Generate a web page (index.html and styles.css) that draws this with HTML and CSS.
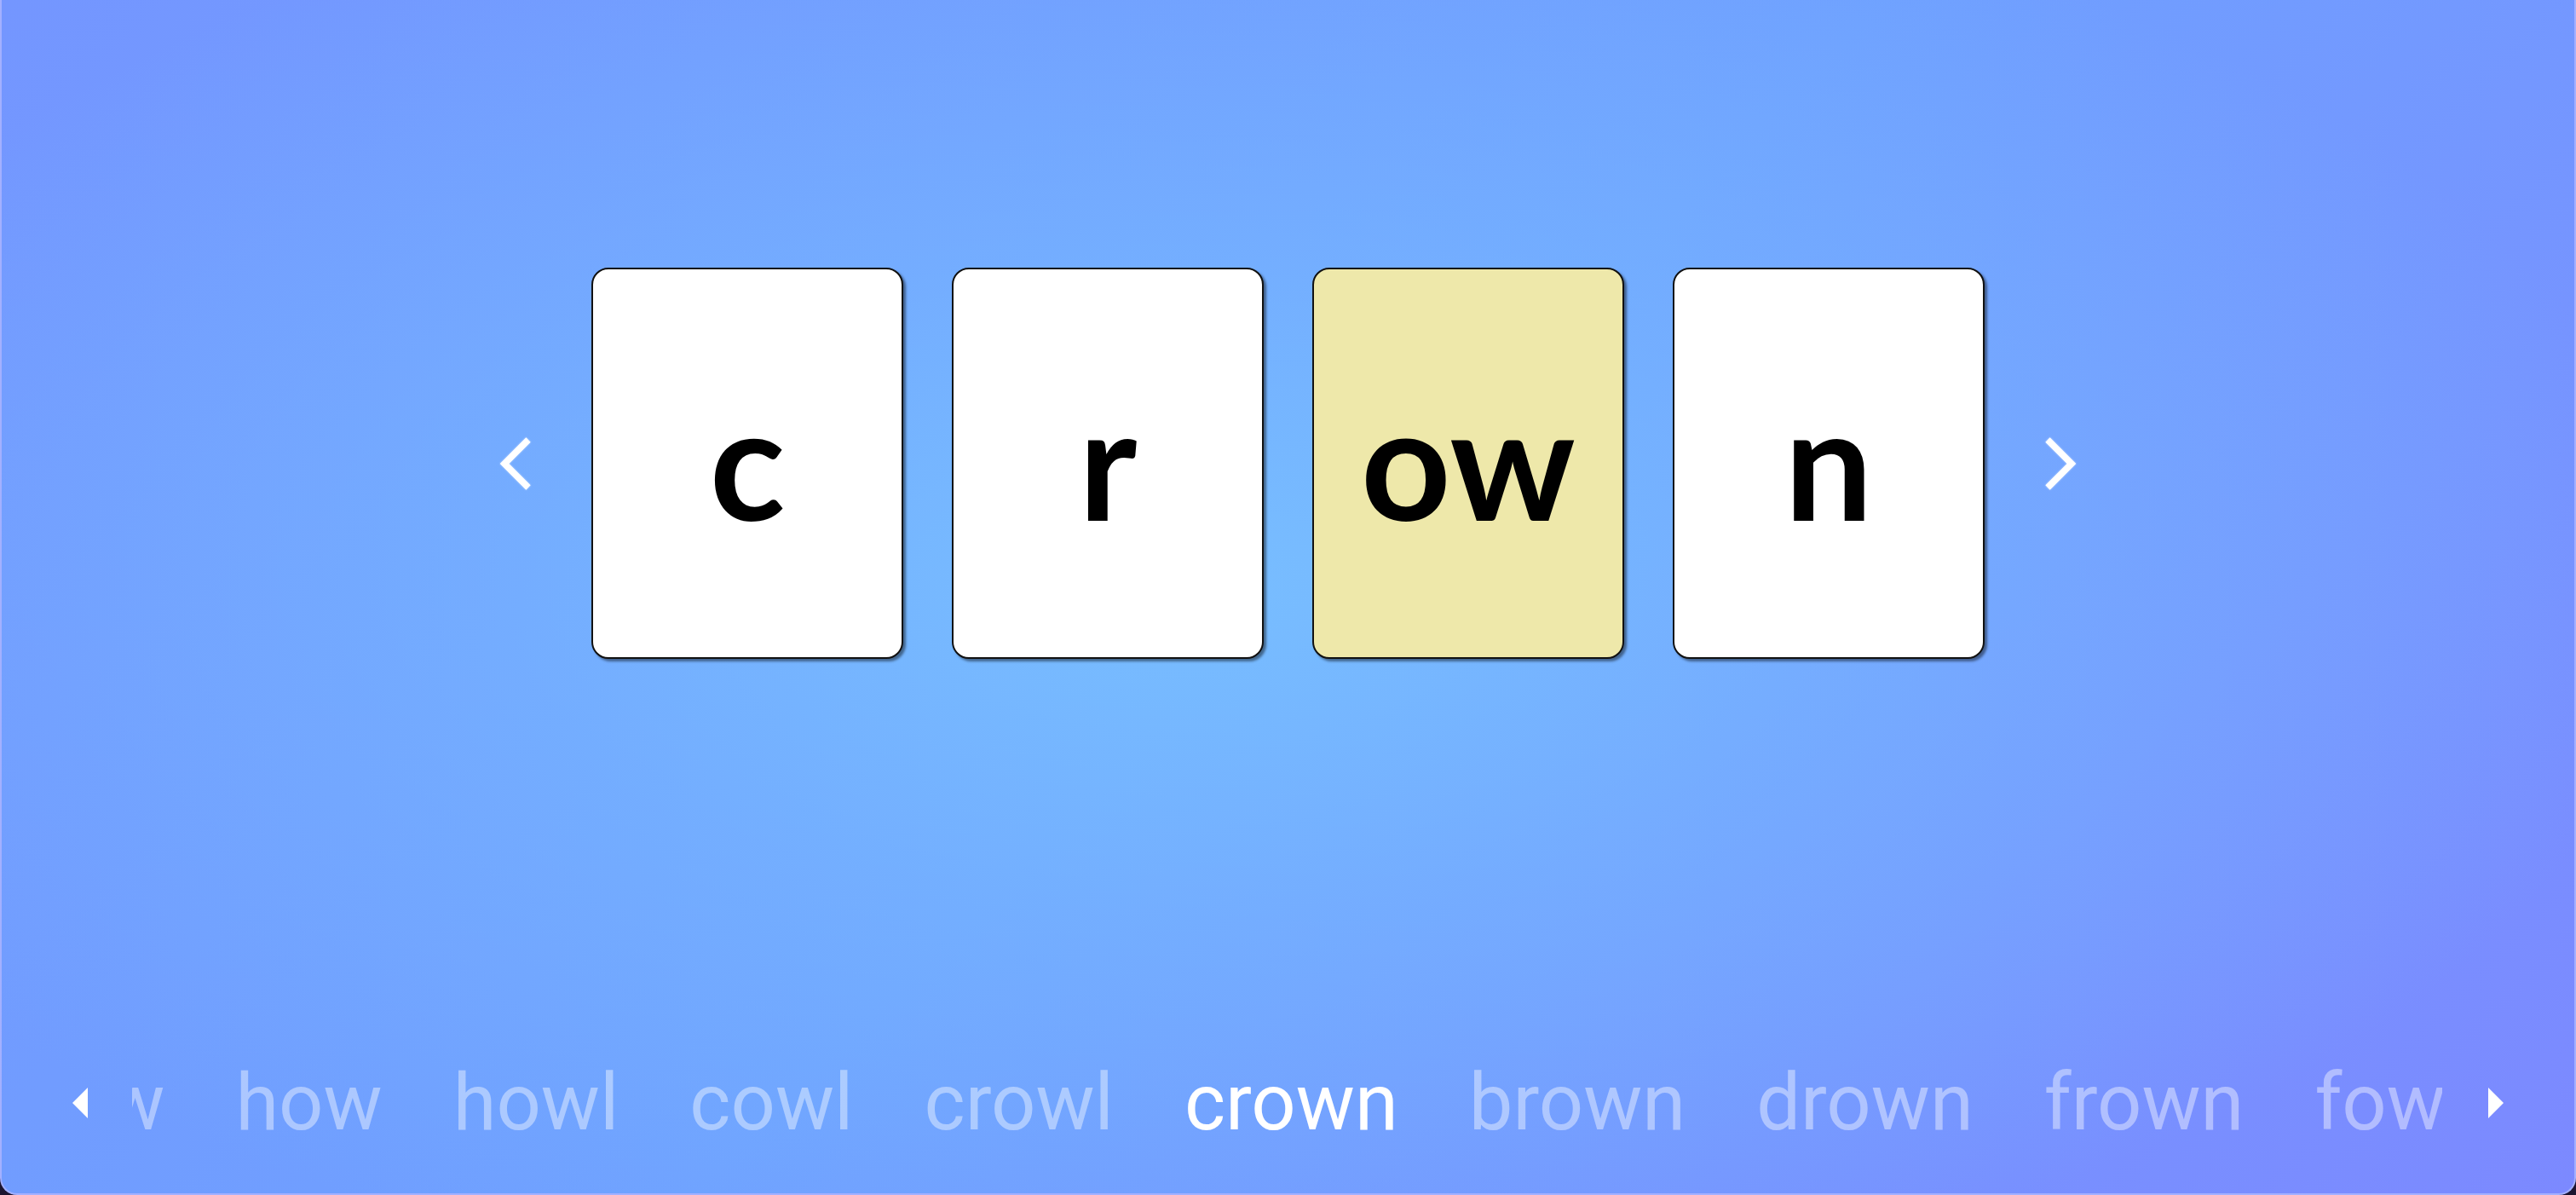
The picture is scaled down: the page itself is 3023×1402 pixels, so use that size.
FILE: index.html
```html
<!DOCTYPE html>
<html lang="en">
<head>
<meta charset="utf-8">
<title>crown</title>
<link rel="stylesheet" href="styles.css">
</head>
<body>
<div class="app">
  <div class="stage">
    <button class="chev" aria-label="Previous">
      <svg width="40" height="66" viewBox="0 0 40 66"><polyline points="34,5 6,33 34,61" fill="none" stroke="#fff" stroke-width="7.5" stroke-linejoin="miter"/></svg>
    </button>
    <div class="cards">
      <div class="card"><span class="letter">c</span></div>
      <div class="card"><span class="letter">r</span></div>
      <div class="card card-hl"><span class="letter">ow</span></div>
      <div class="card"><span class="letter">n</span></div>
    </div>
    <button class="chev" aria-label="Next">
      <svg width="40" height="66" viewBox="0 0 40 66"><polyline points="6,5 34,33 6,61" fill="none" stroke="#fff" stroke-width="7.5" stroke-linejoin="miter"/></svg>
    </button>
  </div>
  <div class="nav">
    <button class="tri" aria-label="Scroll left">
      <svg width="18" height="36" viewBox="0 0 18 36"><polygon points="18,0 0,18 18,36" fill="#fff"/></svg>
    </button>
    <div class="viewport">
      <div class="track">
        <span class="word">now</span>
        <span class="word">how</span>
        <span class="word">howl</span>
        <span class="word">cowl</span>
        <span class="word">crowl</span>
        <span class="word active">crown</span>
        <span class="word">brown</span>
        <span class="word">drown</span>
        <span class="word">frown</span>
        <span class="word">fowl</span>
        <span class="word">growl</span>
      </div>
    </div>
    <button class="tri" aria-label="Scroll right">
      <svg width="18" height="36" viewBox="0 0 18 36"><polygon points="0,0 18,18 0,36" fill="#fff"/></svg>
    </button>
  </div>
</div>
</body>
</html>
```

FILE: styles.css
```css
html, body {
  margin: 0;
  padding: 0;
  background: #1c1530;
}

.app {
  box-sizing: border-box;
  width: 3023px;
  height: 1402px;
  border: 2px solid #a3b0ff;
  border-top: none;
  border-radius: 0 0 20px 20px;
  background:
    radial-gradient(ellipse 58% 62% at 46% 49%, rgba(120, 190, 255, 1) 0%, rgba(118, 184, 255, 0.6) 45%, rgba(115, 170, 255, 0) 100%),
    linear-gradient(135deg, #7496ff 0%, #6fa0ff 50%, #7c89ff 100%);
  display: flex;
  flex-direction: column;
  overflow: hidden;
  font-family: Roboto, "Liberation Sans", sans-serif;
}

.stage {
  display: flex;
  justify-content: center;
  align-items: center;
  gap: 68px;
  padding-top: 314px;
}

.chev {
  border: none;
  background: none;
  padding: 0;
  display: flex;
  filter: drop-shadow(0 0 1px rgba(255,255,255,0.6));
}

.cards {
  display: flex;
  gap: 57px;
}

.card {
  box-sizing: border-box;
  width: 366px;
  height: 459px;
  padding-bottom: 8px;
  background: #fff;
  border: 2px solid #111;
  border-radius: 20px;
  box-shadow: 3px 3px 3px rgba(0, 0, 0, 0.45);
  display: flex;
  align-items: center;
  justify-content: center;
}

.card-hl {
  background: #eee8aa;
}

.letter {
  font-family: Lato, "Noto Sans", sans-serif;
  font-weight: 700;
  font-size: 184px;
  color: #000;
  line-height: normal;
}

.nav {
  margin-top: auto;
  display: flex;
  align-items: center;
  padding: 0 83px 52px 83px;
  gap: 52px;
}

.tri {
  border: none;
  background: none;
  padding: 0;
  display: flex;
  filter: blur(0.6px);
}

.tri:last-child {
  margin-left: 2px;
}

.viewport {
  flex: 1;
  overflow: hidden;
}

.track {
  display: flex;
  gap: 83px;
  white-space: nowrap;
  margin-left: -134px;
}

.word {
  font-size: 92px;
  line-height: 108px;
  color: rgba(255, 255, 255, 0.42);
}

.word.active {
  color: #fff;
}
```
